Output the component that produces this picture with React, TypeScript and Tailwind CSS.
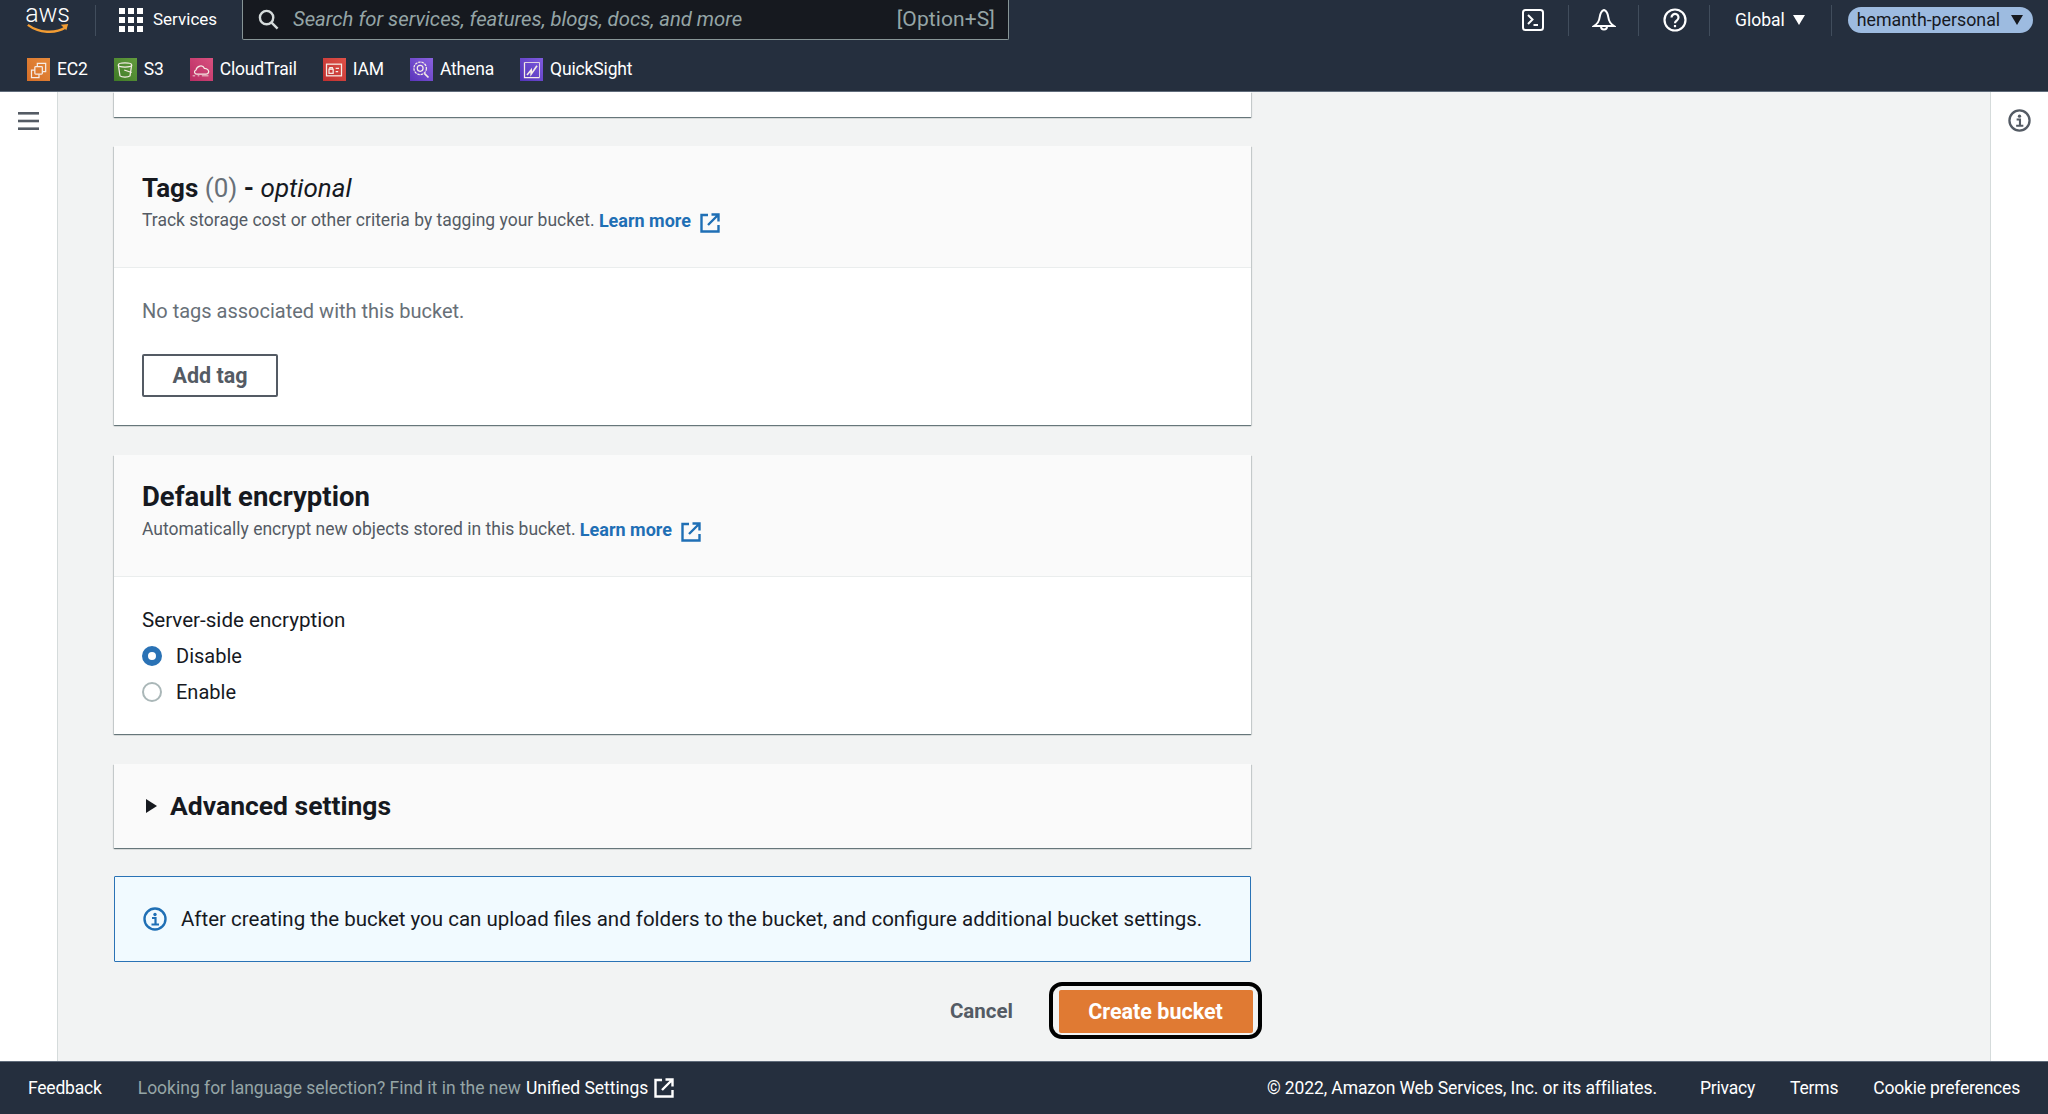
const font = { fontFamily: "Roboto, sans-serif" };

function ExternalIcon({ className }: { className: string }) {
	return (
		<svg viewBox="0 0 20 20" fill="none" stroke="currentColor" strokeWidth="2.4" className={className}>
			<path d="M8 2H1.500v16.500h17V12" />
			<path d="M8 12 18 2M11.500 1.500h7v7" />
		</svg>
	);
}

function InfoIcon({ className }: { className: string }) {
	return (
		<svg viewBox="0 0 24 24" fill="none" stroke="currentColor" className={className}>
			<circle cx="12" cy="12" r="10.500" strokeWidth="2.400" />
			<circle cx="12" cy="7.500" r="1.700" fill="currentColor" stroke="none" />
			<path d="M9 11h3.500v6M8.500 17.500h7.500" strokeWidth="2.200" />
		</svg>
	);
}

function ServiceTile({ from, to, children }: { from: string; to: string; children: React.ReactNode }) {
	return (
		<span className="w-[23px] h-[23px] flex items-center justify-center" style={{ background: `linear-gradient(45deg, ${from}, ${to})` }}>
			<svg viewBox="0 0 24 24" fill="none" stroke="#f5ece6" strokeWidth="1.500" className="w-[20px] h-[20px]">
				{children}
			</svg>
		</span>
	);
}

const services = [
	{
		name: "EC2",
		from: "#d66f28",
		to: "#e68a3c",
		icon: (
			<>
				<path d="M10 8V4h10v10h-4" />
				<rect x="7" y="8" width="9" height="9" rx="1" />
				<path d="M7 12H3v9h9v-4" />
			</>
		),
	},
	{
		name: "S3",
		from: "#3f7a26",
		to: "#639c3e",
		icon: (
			<>
				<ellipse cx="12" cy="6" rx="8" ry="2.500" />
				<path d="M4 6l2 13c2 2 10 2 12 0l2-13" />
				<path d="M11 12l9 3" />
			</>
		),
	},
	{
		name: "CloudTrail",
		from: "#b92d63",
		to: "#d9517f",
		icon: (
			<>
				<path d="M7 17c-3 0-4-4-1-5 1-5 8-7 10-2 4 0 6 3 5 5-.5 2-2 2-3 2z" />
				<path d="M2 19h3M8 19h2M13 19h8" strokeWidth="1" />
			</>
		),
	},
	{
		name: "IAM",
		from: "#bf2f2f",
		to: "#df5148",
		icon: (
			<>
				<rect x="3" y="5" width="18" height="14" />
				<rect x="6" y="11" width="5" height="5" />
				<path d="M7 11V9h3v2M14 10h4M14 14h3" />
			</>
		),
	},
	{
		name: "Athena",
		from: "#5a34ba",
		to: "#8a62e0",
		icon: (
			<>
				<circle cx="11" cy="10" r="7.500" strokeDasharray="3 1" />
				<circle cx="11" cy="10" r="3.500" />
				<path d="M16 16l5 5" strokeWidth="2" />
			</>
		),
	},
	{
		name: "QuickSight",
		from: "#5233b8",
		to: "#7f5bdf",
		icon: (
			<>
				<path d="M3 3v18h18" />
				<path d="M3 3h18v18" strokeWidth="1" />
				<path d="M6 18l5-6v5l7-10" strokeWidth="2" />
			</>
		),
	},
];

const cardShadow = "shadow-[0_1px_1px_0_rgba(0,28,36,0.45),1px_1px_1px_0_rgba(0,28,36,0.12),-1px_1px_1px_0_rgba(0,28,36,0.12)]";

function Radio({ checked, label }: { checked?: boolean; label: string }) {
	return (
		<div className="flex items-center h-[36px]">
			{checked ? (
				<span className="w-[20px] h-[20px] rounded-full border-[6px] border-[#2a72b5] bg-white" />
			) : (
				<span className="w-[20px] h-[20px] rounded-full border-2 border-[#aab7b8] bg-white" />
			)}
			<span className="ml-[14px] text-[20px] text-[#16191f]">{label}</span>
		</div>
	);
}

function NavDivider({ ml }: { ml: string }) {
	return <div className={`w-px h-[31px] bg-[#414d5c] ${ml}`} />;
}

export default function App() {
	return (
		<div style={font} className="w-[2048px] h-[1114px] flex flex-col overflow-hidden bg-[#f2f3f3]">
			<header className="h-[92px] shrink-0 bg-[#252f3e] border-b border-[#5f6b7a] text-white">
				<div className="h-[40px] flex items-center">
					<div className="w-[95px] h-[40px] flex flex-col items-center shrink-0 pt-[1px]">
						<span className="text-[25px] leading-[25px] font-light tracking-[-0.2px]">aws</span>
						<svg viewBox="0 0 46 12" className="w-[46px] h-[11px] -mt-[3px]">
							<path d="M1 2c12 9 30 10 41 3" fill="none" stroke="#f29c33" strokeWidth="2.600" />
							<path d="M37 2l8-1-2 7z" fill="#f29c33" />
						</svg>
					</div>
					<NavDivider ml="" />
					<div className="flex items-center ml-[23px] w-[123px]">
						<div className="grid grid-cols-3 gap-[3px] w-[24px]">
							{[1, 2, 3, 4, 5, 6, 7, 8, 9].map((i) => (
								<span key={i} className="w-[6px] h-[6px] bg-white" />
							))}
						</div>
						<span className="ml-[10px] text-[17px]">Services</span>
					</div>
					<div className="w-[767px] h-[41px] -mt-px flex items-center bg-[#16191f] border border-[#879596] border-t-0 rounded-b-[2px] pl-[15px] pr-[13px]">
						<svg viewBox="0 0 22 22" fill="none" stroke="#d5dbdb" strokeWidth="2.500" className="w-[21px] h-[21px]">
							<circle cx="9" cy="9" r="7" />
							<path d="M14 14l6.500 6.500" />
						</svg>
						<span className="ml-[14px] flex-1 text-[20.3px] italic text-[#95a5a6] pt-[1px]">
							Search for services, features, blogs, docs, and more
						</span>
						<span className="text-[21px] text-[#95a5a6] tracking-[0.1px] pt-[1px]">[Option+S]</span>
					</div>
					<div className="ml-[513px] flex items-center h-[40px]">
						<svg viewBox="0 0 22 22" fill="none" stroke="#fff" strokeWidth="2" className="w-[22px] h-[22px]">
							<rect x="1" y="1" width="20" height="20" rx="2.500" />
							<path d="M6 6l4.500 4.500L6 15M11.500 16H16" />
						</svg>
						<NavDivider ml="ml-[24px]" />
						<svg viewBox="0 0 24 24" fill="none" stroke="#fff" strokeWidth="2" className="w-[24px] h-[24px] ml-[23px]">
							<path d="M12 2c-3 1-4 4-4.500 8-.3 3-2.500 6-5.500 8h20c-3-2-5.200-5-5.500-8-.5-4-1.500-7-4.500-8z" />
							<path d="M9 18.500a3 3 0 0 0 6 0" />
						</svg>
						<NavDivider ml="ml-[22px]" />
						<svg viewBox="0 0 24 24" fill="none" stroke="#fff" strokeWidth="2.200" className="w-[24px] h-[24px] ml-[24px]">
							<circle cx="12" cy="12" r="10.500" />
							<path d="M8.500 9.500a3.500 3.500 0 1 1 5.500 2.800c-1.300 1-2 1.500-2 3" />
							<path d="M12 17v2.200" />
						</svg>
						<NavDivider ml="ml-[22px]" />
						<span className="ml-[25px] text-[17.5px]">Global</span>
						<span className="ml-[8px] w-0 h-0 border-x-[6px] border-x-transparent border-t-[10px] border-t-white" />
						<NavDivider ml="ml-[26px]" />
						<div className="ml-[16px] w-[185px] h-[26px] rounded-[13px] bg-[#9dbbe0] text-[#16191f] flex items-center justify-between pl-[9px] pr-[10px]">
							<span className="text-[17.8px]">hemanth-personal</span>
							<span className="w-0 h-0 border-x-[6px] border-x-transparent border-t-[10px] border-t-[#16191f]" />
						</div>
					</div>
				</div>
				<div className="h-[51px] flex items-center pl-[27px] pt-[8px] gap-[26px]">
					{services.map((s) => (
						<div key={s.name} className="flex items-center">
							<ServiceTile from={s.from} to={s.to}>
								{s.icon}
							</ServiceTile>
							<span className="ml-[7px] text-[17.5px] tracking-[-0.15px]">{s.name}</span>
						</div>
					))}
				</div>
			</header>

			<main className="flex-1 flex min-h-0">
				<aside className="w-[58px] shrink-0 bg-white border-r border-[#d5dbdb] pt-[20px] flex justify-center">
					<svg viewBox="0 0 21 18" className="w-[21px] h-[18px]" fill="#545b64">
						<rect width="21" height="2.600" />
						<rect y="7.700" width="21" height="2.600" />
						<rect y="15.400" width="21" height="2.600" />
					</svg>
				</aside>
				<div className="flex-1 min-w-0 pl-[56px] overflow-hidden">
					<div className="w-[1137px] flex flex-col">
						<section className={`h-[25px] bg-white ${cardShadow}`} />

						<section className={`mt-[29px] bg-white ${cardShadow}`}>
							<div className="h-[122px] bg-[#fafafa] border-b border-[#eaeded] px-[28px] pt-[26px]">
								<h2 className="text-[26px] leading-[32px] text-[#16191f] font-bold">
									Tags <span className="font-normal text-[#687078]">(0)</span> - <em className="font-normal">optional</em>
								</h2>
								<p className="mt-[3px] text-[17.5px] text-[#545b64] flex items-start">
									Track storage cost or other criteria by tagging your bucket.&nbsp;
									<a className="text-[18px] font-bold text-[#1f6fb5]">Learn more</a>
									<ExternalIcon className="w-[20px] h-[20px] ml-[9px] mt-[6px] text-[#1f6fb5]" />
								</p>
							</div>
							<div className="h-[157px] px-[28px] pt-[28px]">
								<p className="text-[20px] text-[#687078]">No tags associated with this bucket.</p>
								<button className="mt-[28px] w-[136px] h-[43px] pt-[1px] border-2 border-[#545b64] rounded-[2px] text-[21.5px] font-bold text-[#545b64]">
									Add tag
								</button>
							</div>
						</section>

						<section className={`mt-[30px] bg-white ${cardShadow}`}>
							<div className="h-[122px] bg-[#fafafa] border-b border-[#eaeded] px-[28px] pt-[26px]">
								<h2 className="text-[27.500px] leading-[32px] text-[#16191f] font-bold">Default encryption</h2>
								<p className="mt-[3px] text-[17.5px] text-[#545b64] flex items-start">
									Automatically encrypt new objects stored in this bucket.&nbsp;
									<a className="text-[18px] font-bold text-[#1f6fb5]">Learn more</a>
									<ExternalIcon className="w-[20px] h-[20px] ml-[9px] mt-[6px] text-[#1f6fb5]" />
								</p>
							</div>
							<div className="h-[157px] px-[28px] pt-[30px]">
								<p className="text-[20.600px] leading-[26px] text-[#16191f]">Server-side encryption</p>
								<div className="mt-[5px]">
									<Radio checked label="Disable" />
									<Radio label="Enable" />
								</div>
							</div>
						</section>

						<section className={`mt-[30px] h-[84px] bg-[#fafafa] ${cardShadow} px-[28px] flex items-center`}>
							<span className="w-0 h-0 border-y-[7px] border-y-transparent border-l-[11px] border-l-[#16191f] ml-[4px]" />
							<h2 className="ml-[13px] text-[26.500px] font-bold text-[#16191f]">Advanced settings</h2>
						</section>

						<div className="mt-[28px] h-[86px] bg-[#f1faff] border border-[#2a72b5] rounded-[1px] flex items-center pl-[28px]">
							<InfoIcon className="w-[24px] h-[24px] text-[#1f6fb5]" />
							<span className="ml-[14px] text-[20.500px] text-[#16191f]">
								After creating the bucket you can upload files and folders to the bucket, and configure additional bucket settings.
							</span>
						</div>

						<div className="mt-[20px] h-[57px] flex items-center justify-end">
							<span className="pt-[1px] text-[20.500px] font-bold text-[#545b64]">Cancel</span>
							<div className="ml-[36px] mr-[-11px] w-[213px] h-[57px] border-[4px] border-black rounded-[13px] flex justify-center items-start pt-[4px]">
								<button className="w-[194px] h-[43px] pt-[1px] bg-[#e07a33] rounded-[2px] text-white text-[21.500px] font-bold">Create bucket</button>
							</div>
						</div>
					</div>
				</div>
				<aside className="w-[58px] shrink-0 bg-white border-l border-[#d5dbdb] pt-[17px] flex justify-center">
					<InfoIcon className="w-[23px] h-[23px] text-[#545b64]" />
				</aside>
			</main>

			<footer className="h-[53px] shrink-0 bg-[#252f3e] border-t border-[#5f6b7a] flex items-center pl-[28px] pr-[28px] text-[17.5px] text-white">
				<span className="tracking-[-0.2px]">Feedback</span>
				<span className="ml-[36px] text-[#95a5a6]">Looking for language selection? Find it in the new</span>
				<span className="ml-[5px]">Unified Settings</span>
				<ExternalIcon className="w-[20px] h-[20px] ml-[6px]" />
				<span className="ml-auto tracking-[-0.1px]">© 2022, Amazon Web Services, Inc. or its affiliates.</span>
				<span className="ml-[43px] tracking-[-0.2px]">Privacy</span>
				<span className="ml-[35px] tracking-[-0.2px]">Terms</span>
				<span className="ml-[35px] tracking-[-0.2px]">Cookie preferences</span>
			</footer>
		</div>
	);
}
